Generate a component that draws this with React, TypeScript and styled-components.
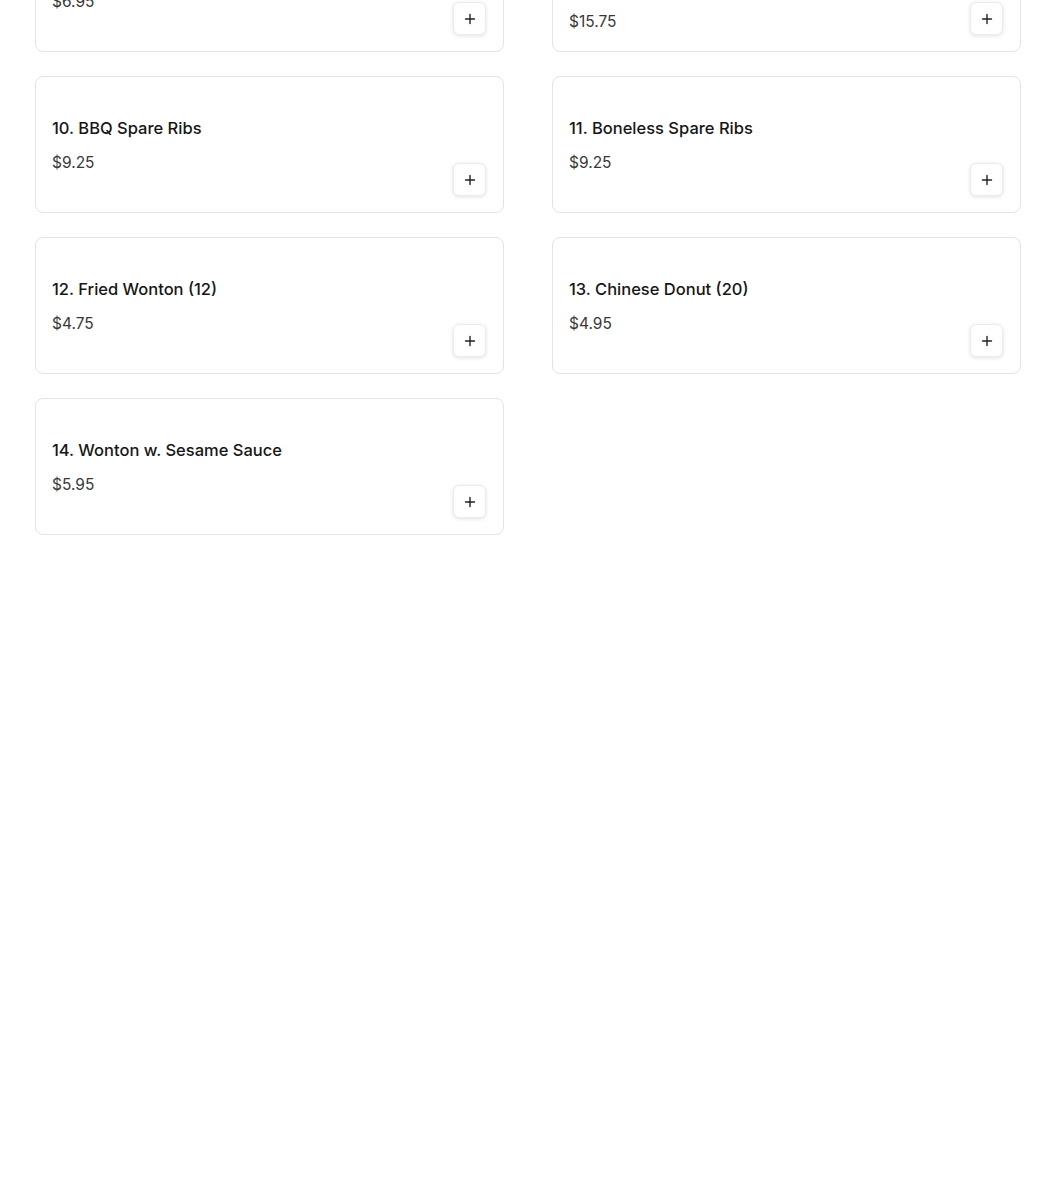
import React from "react";
import styled, { createGlobalStyle } from "styled-components";

const Global = createGlobalStyle`
  html, body { margin: 0; padding: 0; background: #ffffff; }
  body { font-family: "Inter", "Noto Sans", sans-serif; color: #1a1a1a; overflow: hidden; }
`;

const Page = styled.div`
  width: 1050px;
  height: 1200px;
  overflow: hidden;
  box-sizing: border-box;
  padding-left: 35px;
`;

const Grid = styled.div`
  width: 986px;
  margin-top: -85px;
  display: grid;
  grid-template-columns: 469px 469px;
  column-gap: 48px;
  row-gap: 24px;
`;

const Card = styled.div`
  box-sizing: border-box;
  min-height: 137px;
  border: 1px solid #e3e3e3;
  border-radius: 8px;
  background: #fff;
  padding: 16px;
  display: grid;
  grid-template-columns: 1fr auto;
  column-gap: 16px;
`;

const Info = styled.div`
  padding-top: 25px;
  display: flex;
  flex-direction: column;
  gap: 15px;
  min-width: 0;
`;

const Title = styled.div`
  font-size: 16.5px;
  line-height: 20px;
  font-weight: 500;
  color: #161616;
`;

const Price = styled.div`
  font-size: 15.5px;
  line-height: 20px;
  font-weight: 400;
  color: #383838;
`;

const AddButton = styled.button`
  align-self: end;
  box-sizing: border-box;
  width: 33px;
  height: 33px;
  margin-right: 1px;
  border: 1px solid #ececec;
  border-radius: 6px;
  background: #fff;
  box-shadow: 0 1px 4px rgba(0, 0, 0, 0.12);
  display: flex;
  align-items: center;
  justify-content: center;
  padding: 0;
  cursor: pointer;
`;

type Item = { name: string; price: string };

const items: Item[] = [
  { name: "8. Egg Roll w. Shrimp", price: "$6.95" },
  { name: "9. Sesame Chicken Wings w. Egg Roll (Large) (Spicy) Egg Roll Special", price: "$15.75" },
  { name: "10. BBQ Spare Ribs", price: "$9.25" },
  { name: "11. Boneless Spare Ribs", price: "$9.25" },
  { name: "12. Fried Wonton (12)", price: "$4.75" },
  { name: "13. Chinese Donut (20)", price: "$4.95" },
  { name: "14. Wonton w. Sesame Sauce", price: "$5.95" },
];

const PlusIcon = () => (
  <svg width="12" height="12" viewBox="0 0 12 12" fill="none">
    <path d="M6 1.5v9M1.5 6h9" stroke="#222" strokeWidth="1.4" strokeLinecap="round" />
  </svg>
);

export default function App() {
  return (
    <Page>
      <Global />
      <Grid>
        {items.map((it) => (
          <Card key={it.name}>
            <Info>
              <Title>{it.name}</Title>
              <Price>{it.price}</Price>
            </Info>
            <AddButton aria-label="Add">
              <PlusIcon />
            </AddButton>
          </Card>
        ))}
      </Grid>
    </Page>
  );
}
